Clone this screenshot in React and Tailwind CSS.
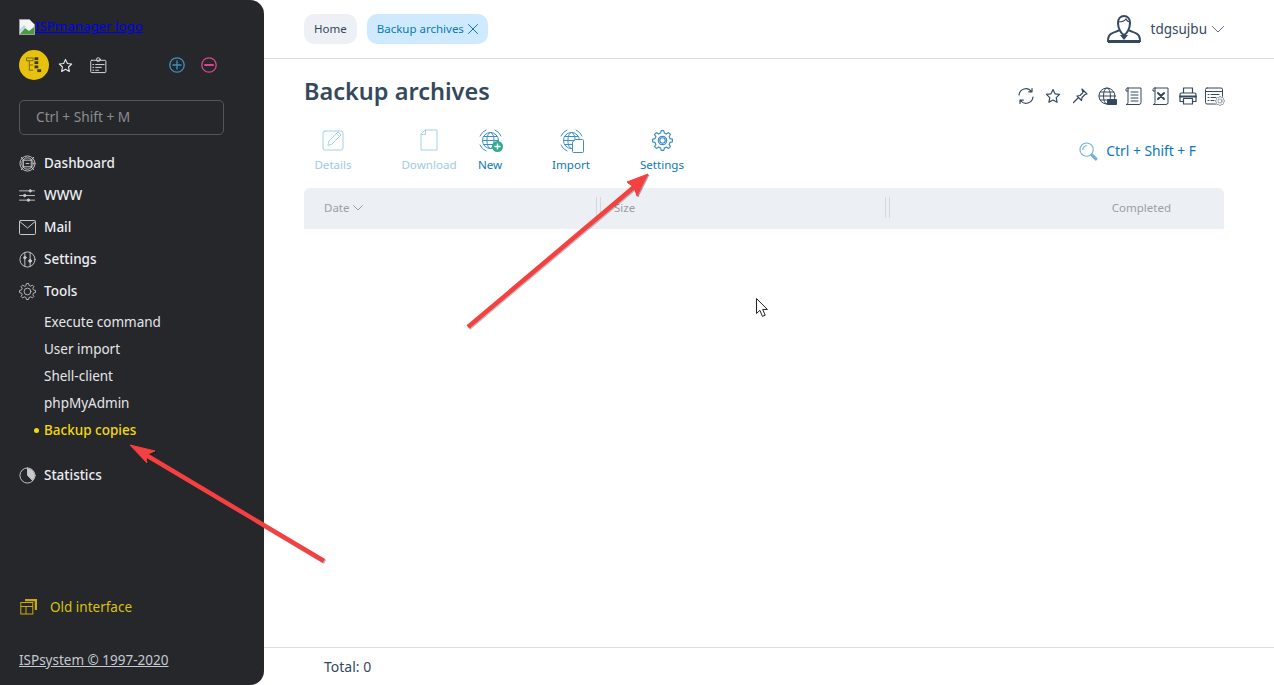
import React from 'react';

const s = { fill: 'none', stroke: 'currentColor', strokeWidth: 1, strokeLinecap: 'round', strokeLinejoin: 'round' };

// outline of a cog wheel, centred in a 20x20 box
const gearPath = (teeth, outer, inner) => {
  const step = (Math.PI * 2) / teeth;
  const pts = [];
  for (let i = 0; i < teeth; i++) {
    const a = i * step - Math.PI / 2;
    const list = [
      [inner, a - step * 0.32],
      [outer, a - step * 0.17],
      [outer, a + step * 0.17],
      [inner, a + step * 0.32],
    ];
    list.forEach(([r, t]) => pts.push(`${(10 + r * Math.cos(t)).toFixed(2)} ${(10 + r * Math.sin(t)).toFixed(2)}`));
  }
  return `M${pts.join('L')}z`;
};

const Star = ({ className }) => (
  <svg viewBox="0 0 16 16" className={className} {...s} strokeWidth="1.2">
    <path d="M8 1.500l2 4.300 4.600.6-3.400 3.200.9 4.700L8 12l-4.100 2.300.9-4.700L1.400 6.400 6 5.800z" />
  </svg>
);

const Gear = ({ className, strokeWidth = 1, double }) => (
  <svg viewBox="0 0 20 20" className={className} {...s} strokeWidth={strokeWidth}>
    <path d={gearPath(8, 9.500, 7.300)} />
    <circle cx="10" cy="10" r="4" />
    {double && <circle cx="10" cy="10" r="2.600" />}
  </svg>
);

const Globe = ({ className }) => (
  <svg viewBox="0 0 23 23" className={className} {...s}>
    <circle cx="11.500" cy="11.500" r="8" />
    <ellipse cx="11.500" cy="11.500" rx="3.600" ry="8" />
    <path d="M3.500 11.500h16M4.800 7.500h13.400M4.800 15.500h13.400" />
    <path d="M1 7a11.500 11.500 0 0 1 6-6M16 1a11.500 11.500 0 0 1 6 6M1 16a11.500 11.500 0 0 0 6 6" />
  </svg>
);

const navIcons = {
  dashboard: (
    <svg viewBox="0 0 18 18" className="w-[17px] h-[17px]" {...s}>
      <circle cx="9" cy="9" r="8" />
      <circle cx="9" cy="9" r="6" />
      <rect x="5" y="5.500" width="8" height="7" />
      <path d="M2.500 2.500l2.500 3M15.500 2.500l-2.500 3M2.500 15.500l2.500-3M15.500 15.500l-2.500-3M7.500 9h3" />
    </svg>
  ),
  www: (
    <svg viewBox="0 0 18 14" className="w-[17px] h-[13px]" fill="none" stroke="currentColor">
      <path d="M0 2h17M0 7h17M0 12h17" />
      <circle cx="12" cy="2" r="1.300" fill="currentColor" />
      <circle cx="6" cy="7" r="1.300" fill="currentColor" />
      <circle cx="10" cy="12" r="1.300" fill="currentColor" />
    </svg>
  ),
  mail: (
    <svg viewBox="0 0 17 15" className="w-[17px] h-[15px]" {...s}>
      <rect x=".5" y=".5" width="16" height="14" rx="1" />
      <path d="M.8 1.500L8.500 8l7.700-6.500" />
    </svg>
  ),
  settings: (
    <svg viewBox="0 0 18 18" className="w-[17px] h-[17px]" {...s}>
      <circle cx="9" cy="9" r="8" />
      <path d="M6.200 2v14M11.800 2v14" />
      <circle cx="6.200" cy="7" r="1.300" fill="currentColor" />
      <circle cx="11.800" cy="10.500" r="1.500" fill="currentColor" />
    </svg>
  ),
  tools: <Gear className="w-[17px] h-[17px]" />,
  statistics: (
    <svg viewBox="0 0 18 18" className="w-[17px] h-[17px]" {...s}>
      <circle cx="9" cy="9" r="8" />
      <path d="M9.500 1.500a7.500 7.500 0 0 1 5 12.500L9.500 9z" fill="currentColor" stroke="none" />
      <path d="M9 1v8l5.500 5.500" />
    </svg>
  ),
};

const mainNav = [
  { key: 'dashboard', label: 'Dashboard' },
  { key: 'www', label: 'WWW' },
  { key: 'mail', label: 'Mail' },
  { key: 'settings', label: 'Settings' },
  { key: 'tools', label: 'Tools' },
];

const subNav = ['Execute command', 'User import', 'Shell-client', 'phpMyAdmin'];

const NavRow = ({ icon, label }) => (
  <div className="h-8 flex items-center">
    <span className="w-[25px] flex justify-start text-[#c9cacc]">{navIcons[icon]}</span>
    <span className="text-[13.5px] font-medium text-[#eceef2]">{label}</span>
  </div>
);

const Sidebar = () => (
  <aside className="w-[264px] h-full shrink-0 bg-[#26272b] rounded-r-[14px] pl-[19px] flex flex-col">
    <a href="#" className="mt-[19px] h-4 flex items-center text-[13.3px] leading-none text-[#0000ee] underline whitespace-nowrap">
      <svg viewBox="0 0 16 16" className="w-4 h-4 shrink-0">
        <path d="M.5.5h10l5 5v10H.500z" fill="#f4f4f4" stroke="#a0a0a0" />
        <path d="M1 15l5-6 4 3 5-4v7z" fill="#4c9a3f" />
        <path d="M1 10l4-4 2 2-6 6z" fill="#b9d7f5" />
      </svg>
      ISPmanager logo
    </a>
    <div className="mt-[15px] h-[30px] flex items-center">
      <span className="w-[30px] h-[30px] rounded-full bg-[#e6c20c] flex items-center justify-center">
        <svg viewBox="0 0 18 18" className="w-[17px] h-[18px]" fill="none" stroke="#7a6410">
          <path d="M.5 1.500h7v3h-7zM3.500 4.500v10h4M3.500 9h4" />
          <rect x="9" y=".8" width="4" height="3" fill="#3b3a20" stroke="none" />
          <rect x="9" y="5" width="4" height="3" fill="#3b3a20" stroke="none" />
          <rect x="9" y="9.500" width="4" height="3" fill="#3b3a20" stroke="none" />
          <rect x="12" y="13.500" width="4" height="3" fill="#3b3a20" stroke="none" />
        </svg>
      </span>
      <Star className="ml-[9px] w-[15px] h-[15px] text-[#e8e8e8]" />
      <svg viewBox="0 0 18 18" className="ml-[17px] w-[17px] h-[17px] text-[#e0e0e0]" {...s}>
        <rect x=".8" y="3.500" width="16" height="13" rx="1" />
        <circle cx="8.800" cy="2.800" r="2" />
        <path d="M3 8h1M6 8h9M3 11h1M6 11h6M3 14h1M6 14h3" />
      </svg>
      <svg viewBox="0 0 16 16" className="ml-[62px] w-4 h-4 text-[#3d92c4]" {...s} strokeWidth="1.300">
        <circle cx="8" cy="8" r="7.200" />
        <path d="M8 4v8M4 8h8" />
      </svg>
      <svg viewBox="0 0 16 16" className="ml-4 w-4 h-4 text-[#d9488f]" {...s} strokeWidth="1.300">
        <circle cx="8" cy="8" r="7.200" />
        <path d="M4 8h8" strokeWidth="1.800" />
      </svg>
    </div>
    <div className="mt-5 w-[205px] h-[35px] rounded-[5px] border border-[#55565a] pl-4 flex items-center text-[13.7px] text-[#8c8d90]">
      Ctrl + Shift + M
    </div>
    <nav className="mt-3">
      {mainNav.map((item) => (
        <NavRow key={item.key} icon={item.key} label={item.label} />
      ))}
    </nav>
    <div className="pl-[25px] mt-[2px]">
      {subNav.map((label) => (
        <div key={label} className="h-[27px] flex items-center text-[13.5px] text-[#e4e6ea]">{label}</div>
      ))}
      <div className="h-[27px] flex items-center text-[13.5px] font-medium text-[#f5d90a] relative">
        <span className="absolute left-[-10px] w-[5px] h-[5px] rounded-full bg-[#f5d90a]" />
        Backup copies
      </div>
    </div>
    <div className="mt-[15px]">
      <NavRow icon="statistics" label="Statistics" />
    </div>
    <div className="mt-auto h-8 flex items-center text-[13.5px] text-[#d9c209]">
      <svg viewBox="0 0 17 16" className="w-[17px] h-[16px] ml-[1px] mr-[13px]" fill="none" stroke="#c9ab0c">
        <path d="M5 1h11v10" strokeWidth="2.500" />
        <rect x=".8" y="3.500" width="12" height="11.500" fill="#26272b" />
        <path d="M1 7.500h12M6 7.500V15" />
      </svg>
      Old interface
    </div>
    <a href="#" className="mt-[29px] mb-[17px] h-[16px] leading-4 text-[13.5px] text-[#c5c9ce] underline">ISPsystem © 1997-2020</a>
  </aside>
);

const ToolbarItem = ({ icon, label, disabled, className }) => (
  <div className={`flex flex-col items-center ${disabled ? 'text-[#9ccbe6]' : 'text-[#0a78b8]'} ${className}`}>
    <span className="h-[24px] flex items-center justify-center">{icon}</span>
    <span className="mt-[5px] text-[11.6px] leading-4 whitespace-nowrap">{label}</span>
  </div>
);

const iconBlue = 'w-[23px] h-[23px] text-[#3c8fc4]';

const Toolbar = () => (
  <div className="mt-[21px] flex items-start">
    <ToolbarItem
      disabled
      label="Details"
      className="w-[58px]"
      icon={
        <svg viewBox="0 0 23 23" className="w-[23px] h-[23px] text-[#a3d0ea]" {...s}>
          <rect x="1" y="2" width="20" height="19" rx="2" />
          <path d="M6 16l1-4 9-9 3 3-9 9zM14.500 4.500l3 3" />
        </svg>
      }
    />
    <ToolbarItem
      disabled
      label="Download"
      className="w-[58px] ml-[38px]"
      icon={
        <svg viewBox="0 0 18 22" className="w-[18px] h-[22px] text-[#a3d0ea]" {...s}>
          <path d="M5.500 1H17v20H1V5.500zM5.500 1v4.500H1" />
        </svg>
      }
    />
    <ToolbarItem
      label="New"
      className="w-[40px] ml-3"
      icon={
        <span className="relative block w-[23px] h-[23px]">
          <Globe className={iconBlue} />
          <svg viewBox="0 0 10 10" className="absolute right-[-1px] bottom-0 w-[11px] h-[11px]">
            <circle cx="5" cy="5" r="5" fill="#2eac8c" />
            <path d="M5 2.200v5.600M2.200 5h5.600" stroke="#fff" strokeWidth="1.300" />
          </svg>
        </span>
      }
    />
    <ToolbarItem
      label="Import"
      className="w-[46px] ml-[38px]"
      icon={
        <span className="relative block w-[23px] h-[23px]">
          <Globe className={iconBlue} />
          <svg viewBox="0 0 12 14" className="absolute right-[-1px] bottom-[-1px] w-3 h-[14px] text-[#3c8fc4]" {...s}>
            <path d="M3.500.5h7a1 1 0 0 1 1 1v11a1 1 0 0 1-1 1h-9a1 1 0 0 1-1-1V3.500z" fill="#fff" />
          </svg>
        </span>
      }
    />
    <ToolbarItem
      label="Settings"
      className="w-[50px] ml-[43px]"
      icon={<Gear double strokeWidth={1.1} className="w-[21px] h-[21px] text-[#3c8fc4]" />}
    />
    <div className="ml-auto mt-[13px] flex items-center text-[#0a78b8]">
      <svg viewBox="0 0 20 20" className="w-[19px] h-[19px] text-[#6fb4dc]" {...s} strokeWidth="1.200">
        <circle cx="8" cy="8" r="7" />
        <path d="M13 13l5.500 5.500M14 12.500l5 5-1.500 1.500-5-5M4 8a4 4 0 0 1 4-4" />
      </svg>
      <span className="ml-2 mr-7 text-[13.8px] leading-5">Ctrl + Shift + F</span>
    </div>
  </div>
);

const actionIcons = [
  <svg viewBox="0 0 18 18" className="w-[18px] h-[18px]" {...s} strokeWidth="1.200">
    <path d="M2 8a7 7 0 0 1 12.500-3.500M16 10a7 7 0 0 1-12.500 3.500M15 1.500v3.300h-3.300M3 16.500v-3.300h3.300" />
  </svg>,
  <Star className="w-4 h-4" />,
  <svg viewBox="0 0 16 16" className="w-4 h-4" {...s} strokeWidth="1.200">
    <path d="M10 1l5 5-2 .5-3 3-.5 3L5 8l3-.5 3-3zM6.500 9.500L1.500 14.500" />
  </svg>,
  <span className="relative block w-[18px] h-[18px]">
    <svg viewBox="0 0 18 18" className="w-[18px] h-[18px]" {...s}>
      <circle cx="9" cy="9" r="8" />
      <ellipse cx="9" cy="9" rx="3.500" ry="8" />
      <path d="M1 9h16M2.200 5h13.600M2.200 13h13.600" />
    </svg>
    <span className="absolute right-[-1px] bottom-0 w-[10px] h-[6px] bg-[#34495e] rounded-[1px]" />
  </span>,
  <svg viewBox="0 0 17 18" className="w-[17px] h-[18px]" {...s}>
    <path d="M3 1h13v14.500a2 2 0 0 1-2 2H1.500M3 1a1.500 1.500 0 0 0-2 1.500v1.500h2M3 1v14.500a2 2 0 0 1-1.500 2M6 5h7M6 8h7M6 11h7M6 14h7" />
  </svg>,
  <svg viewBox="0 0 17 18" className="w-[17px] h-[18px]" {...s}>
    <path d="M3 1h13v14.500a2 2 0 0 1-2 2H1.500M3 1a1.500 1.500 0 0 0-2 1.500v1.500h2M3 1v14.500a2 2 0 0 1-1.500 2" />
    <path d="M6 6l6 6M12 6l-6 6" strokeWidth="2" />
  </svg>,
  <svg viewBox="0 0 18 18" className="w-[18px] h-[18px]" {...s} strokeWidth="1.200">
    <path d="M4.500 6V1h9v5M4.500 14.500H1V7.500a1.500 1.500 0 0 1 1.500-1.500h13A1.500 1.500 0 0 1 17 7.500v7h-3.500" />
    <path d="M4.500 11.500h9V17h-9z" />
    <path d="M1 9.500h16" strokeWidth="1.800" />
  </svg>,
  <span className="relative block w-[19px] h-[18px]">
    <svg viewBox="0 0 18 18" className="w-[18px] h-[18px]" {...s}>
      <rect x=".5" y="1" width="17" height="16" rx="1.500" />
      <path d="M.5 4.500h17M3 7.500h1M6 7.500h8M3 10.500h1M6 10.500h5M3 13.500h1M6 13.500h3" />
    </svg>
    <Gear className="absolute right-[-1px] bottom-[-1px] w-[10px] h-[10px] bg-white rounded-full" />
  </span>,
];

const Arrow = ({ line, head, color, dx = 0 }) => (
  <g fill={color} stroke={color} transform={`translate(${dx} ${dx})`}>
    <path d={line} strokeWidth="4.500" />
    <path d={head} strokeWidth="1" />
  </g>
);

const Annotations = () => (
  <svg className="absolute inset-0 w-full h-full pointer-events-none" viewBox="0 0 1274 685">
    <Arrow dx={1} color="#00000040" line="M468 327L634 187" head="M648 174L627 182L634 187L637 196z" />
    <Arrow dx={1} color="#00000040" line="M324 561L146 455" head="M130 445L155 451L146 455L147 463z" />
    <Arrow color="#f44040" line="M468 327L634 187" head="M648 174L627 182L634 187L637 196z" />
    <Arrow color="#f44040" line="M324 561L146 455" head="M130 445L155 451L146 455L147 463z" />
    <path d="M756.500 298.500v15l3.400-3.200 2.500 6 2.800-1.100-2.500-5.700h4.700z" fill="#fff" stroke="#222" strokeWidth="1" strokeLinejoin="round" />
  </svg>
);

const Separator = () => (
  <span className="w-[5px] h-[21px] border-x border-[#d5d9dd] shrink-0" />
);

export default function App() {
  return (
    <div className="relative w-[1274px] h-[685px] overflow-hidden bg-white flex font-['Noto_Sans',sans-serif]">
      <Sidebar />
      <main className="flex-1 flex flex-col">
        <header className="h-[59px] shrink-0 border-b border-[#dcdcdc] pl-10 pr-[50px] flex items-center">
          <div className="h-[30px] px-[10px] rounded-[10px] bg-[#edf1f5] text-[#33475b] text-[11.5px] flex items-center">Home</div>
          <div className="ml-[10px] h-[30px] pl-[10px] pr-[9px] rounded-[10px] bg-[#cfeaff] text-[#0a78b8] text-[11.5px] flex items-center gap-[3px]">
            Backup archives
            <svg viewBox="0 0 12 12" className="w-3 h-3" {...s}>
              <path d="M1.500 1.500l9 9M10.500 1.500l-9 9" />
            </svg>
          </div>
          <div className="ml-auto flex items-center text-[#34495e]">
            <svg viewBox="0 0 34 28" className="w-[34px] h-[28px]" fill="none" stroke="currentColor" strokeWidth="2">
              <path d="M11 8c0-4 2.500-7 6-7s6 3 6 7c0 5-3 11-6 12-3-1-6-7-6-12z" />
              <path d="M11.500 7c3 0 6-1 7.500-3 1 2 2.500 3 4 3" strokeWidth="1.200" />
              <path d="M12 15c-1 2-8 2-10 6-1 2-1 3-1 5h32c0-2 0-3-1-5-2-4-9-4-10-6" />
              <path d="M1 27h32" strokeWidth="2" />
              <path d="M13 20l4 5 4-5" fill="currentColor" stroke="none" />
            </svg>
            <span className="ml-[10px] text-[13.5px]">tdgsujbu</span>
            <svg viewBox="0 0 12 7" className="ml-[5px] w-3 h-[7px] text-[#5c6d7e]" {...s}>
              <path d="M.5.5L6 6 11.500.5" />
            </svg>
          </div>
        </header>
        <section className="flex-1 pl-10 pr-[50px] flex flex-col">
          <div className="mt-[16px] h-[32px] flex items-center">
            <h1 className="text-[23.5px] font-semibold text-[#34495e] leading-8">Backup archives</h1>
            <div className="ml-auto mr-[-4px] mt-[10px] flex items-center text-[#34495e]">
              {actionIcons.map((icon, i) => (
                <span key={i} className="w-[27px] flex justify-center">{icon}</span>
              ))}
            </div>
          </div>
          <Toolbar />
          <div className="mt-[15px] h-[41px] pb-[2px] rounded-t-[6px] bg-[#ecf0f4] text-[11.500px] text-[#999fa5] flex items-center">
            <span className="w-[292px] pl-5 flex items-center gap-[4px]">
              Date
              <svg viewBox="0 0 10 6" className="w-[10px] h-[6px]" {...s}>
                <path d="M.5.5L5 5 9.500.5" />
              </svg>
            </span>
            <Separator />
            <span className="w-[284px] pl-[13px]">Size</span>
            <Separator />
            <span className="flex-1 text-right pr-[53px]">Completed</span>
          </div>
        </section>
        <footer className="h-[38px] shrink-0 border-t border-[#dcdcdc] pl-[60px] flex items-center text-[14px] text-[#34495e]">
          Total: 0
        </footer>
      </main>
      <Annotations />
    </div>
  );
}
